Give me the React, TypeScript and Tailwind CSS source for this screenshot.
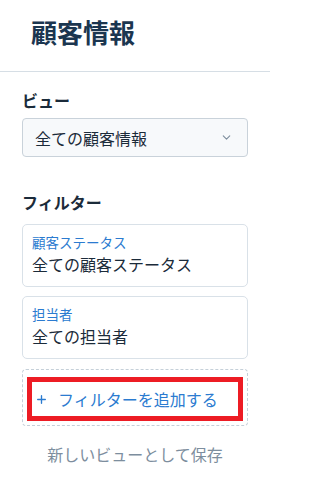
import React from 'react';
import { ChevronDown, Plus } from 'lucide-react';

// --- Filter cards ---
interface FilterItem {
    label: string;
    value: string;
}

const filters: FilterItem[] = [
    { label: '顧客ステータス', value: '全ての顧客ステータス' },
    { label: '担当者', value: '全ての担当者' },
];

const App: React.FC = () => {
    return (
        <div className="w-[270px] min-h-[498px] bg-white" style={{ fontFamily: '"Noto Sans CJK JP", "Noto Sans", sans-serif' }}>
            <div className="h-[72px] border-b border-[#d6dee5] pl-[31px] pt-[16px]">
                <h1 className="text-[26px] leading-[32px] font-bold text-[#1b3650]">顧客情報</h1>
            </div>

            <div className="px-[22px]">
                <h2 className="mt-[16px] text-[16px] leading-[24px] font-bold text-[#1b2b3a]">ビュー</h2>
                <button className="mt-[6px] w-[226px] h-[39px] flex items-center justify-between pl-[12px] pr-[14px] bg-[#f7f9fb] border border-[#c9d2da] rounded-[4px] text-[16px] text-[#1b2b3a]">
                    <span>全ての顧客情報</span>
                    <ChevronDown size={13} strokeWidth={2} className="text-[#7d8d9c]" />
                </button>

                <h2 className="mt-[33px] text-[16px] leading-[24px] font-bold text-[#1b2b3a]">フィルター</h2>
                <div className="mt-[10px] flex flex-col gap-[9px]">
                    {filters.map((f) => (
                        <div key={f.label} className="h-[63px] border border-[#d9e1e8] rounded-[5px] pl-[9px] pt-[7px]">
                            <p className="text-[13.5px] leading-[20px] text-[#2b7bd0]">{f.label}</p>
                            <p className="text-[16px] leading-[24px] text-[#1b2b3a]">{f.value}</p>
                        </div>
                    ))}
                </div>

                <div className="mt-[10px] h-[57px] border border-dashed border-[#c5d0d9] rounded-[4px] pt-[7px] px-[4px]">
                    <button className="w-full h-[44px] flex items-center gap-[10px] pl-[3px] border-[5px] border-[#ed1c24] text-[16px] text-[#2b7bd0]">
                        <Plus size={13} strokeWidth={2.5} />
                        <span>フィルターを追加する</span>
                    </button>
                </div>

                <p className="mt-[16px] text-center text-[16px] leading-[24px] text-[#7d8e9e]">新しいビューとして保存</p>
            </div>
        </div>
    );
};

export default App;
